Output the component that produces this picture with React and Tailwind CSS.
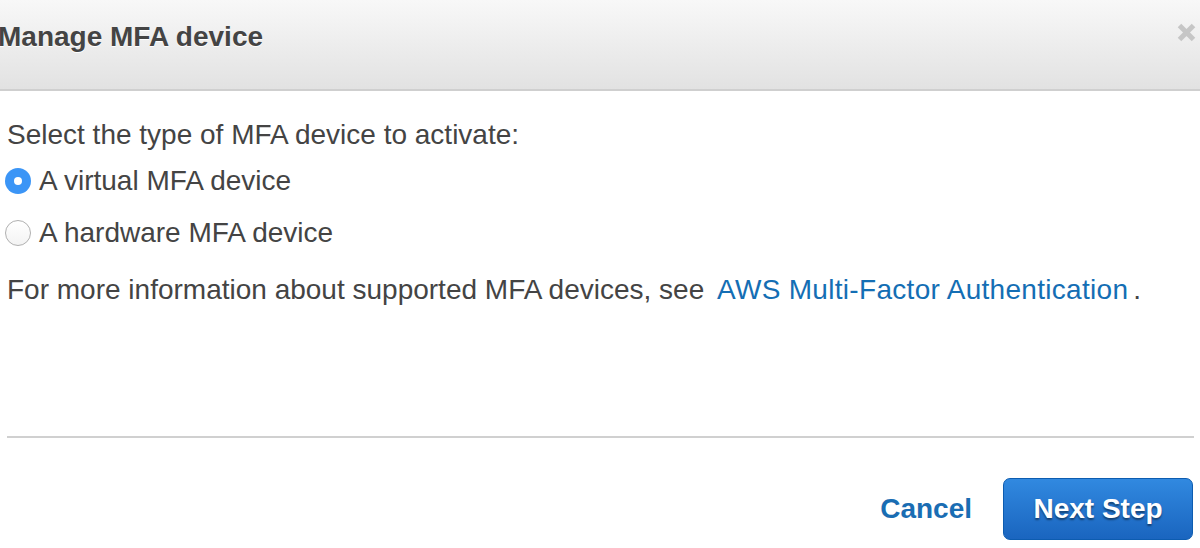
import { useState } from "react";

export default function App() {
  const [type, setType] = useState("virtual");

  return (
    <div className="w-[1200px] h-[548px] bg-white overflow-hidden font-['Liberation_Sans',Arial,sans-serif] text-[#444]">
      <div className="h-[91px] flex items-center justify-between bg-gradient-to-b from-[#f8f8f8] to-[#e2e2e2] border-b-2 border-[#cfcfcf]">
        <h1 className="ml-[-2px] text-[28px] leading-[32px] font-bold text-[#444] mt-[-16px] [text-shadow:0_1px_0_#fff]">Manage MFA device</h1>
        <svg className="mr-[4px] mt-[-24px]" width="19" height="19" viewBox="0 0 19 19">
          <path d="M2.5 2.5 L16.5 16.5 M16.5 2.5 L2.5 16.5" stroke="#c6c6c6" strokeWidth="5" />
        </svg>
      </div>

      <div className="px-[7px]">
        <p className="mt-[28px] text-[28px] leading-[32px]">Select the type of MFA device to activate:</p>

        <div className="mt-[14px] flex flex-col gap-[20px]">
          {[
            ["virtual", "A virtual MFA device"],
            ["hardware", "A hardware MFA device"],
          ].map(([key, label]) => (
            <label key={key} className="flex items-center gap-[8px] text-[28px] leading-[32px] cursor-pointer" onClick={() => setType(key)}>
              {type === key ? (
                <span className="w-[26px] h-[26px] ml-[-2px] rounded-full bg-[#3b95f6] flex items-center justify-center">
                  <span className="w-[8px] h-[8px] rounded-full bg-white" />
                </span>
              ) : (
                <span className="w-[26px] h-[26px] ml-[-2px] rounded-full border border-[#b0b0b0] bg-gradient-to-b from-white to-[#f3f3f3]" />
              )}
              {label}
            </label>
          ))}
        </div>

        <p className="mt-[25px] text-[28px] leading-[32px]">
          For more information about supported MFA devices, see{" "}
          <a href="#" className="ml-[5px] text-[#146eb4] tracking-[0.3px]">AWS Multi-Factor Authentication</a>
          <span className="ml-[5px]">.</span>
        </p>

        <hr className="mt-[130px] w-[1187px] border-0 border-t-2 border-[#d0d0d0]" />

        <div className="mt-[40px] flex items-center justify-end">
          <button className="text-[28px] leading-[32px] font-bold text-[#1a6db3] mr-[31px]">Cancel</button>
          <button className="w-[190px] h-[62px] rounded-[7px] border border-[#0d5cb0] bg-gradient-to-b from-[#3189e0] to-[#1a65bf] text-white text-[28px] font-bold [text-shadow:0_2px_2px_rgba(0,0,0,0.45)]">
            Next Step
          </button>
        </div>
      </div>
    </div>
  );
}
